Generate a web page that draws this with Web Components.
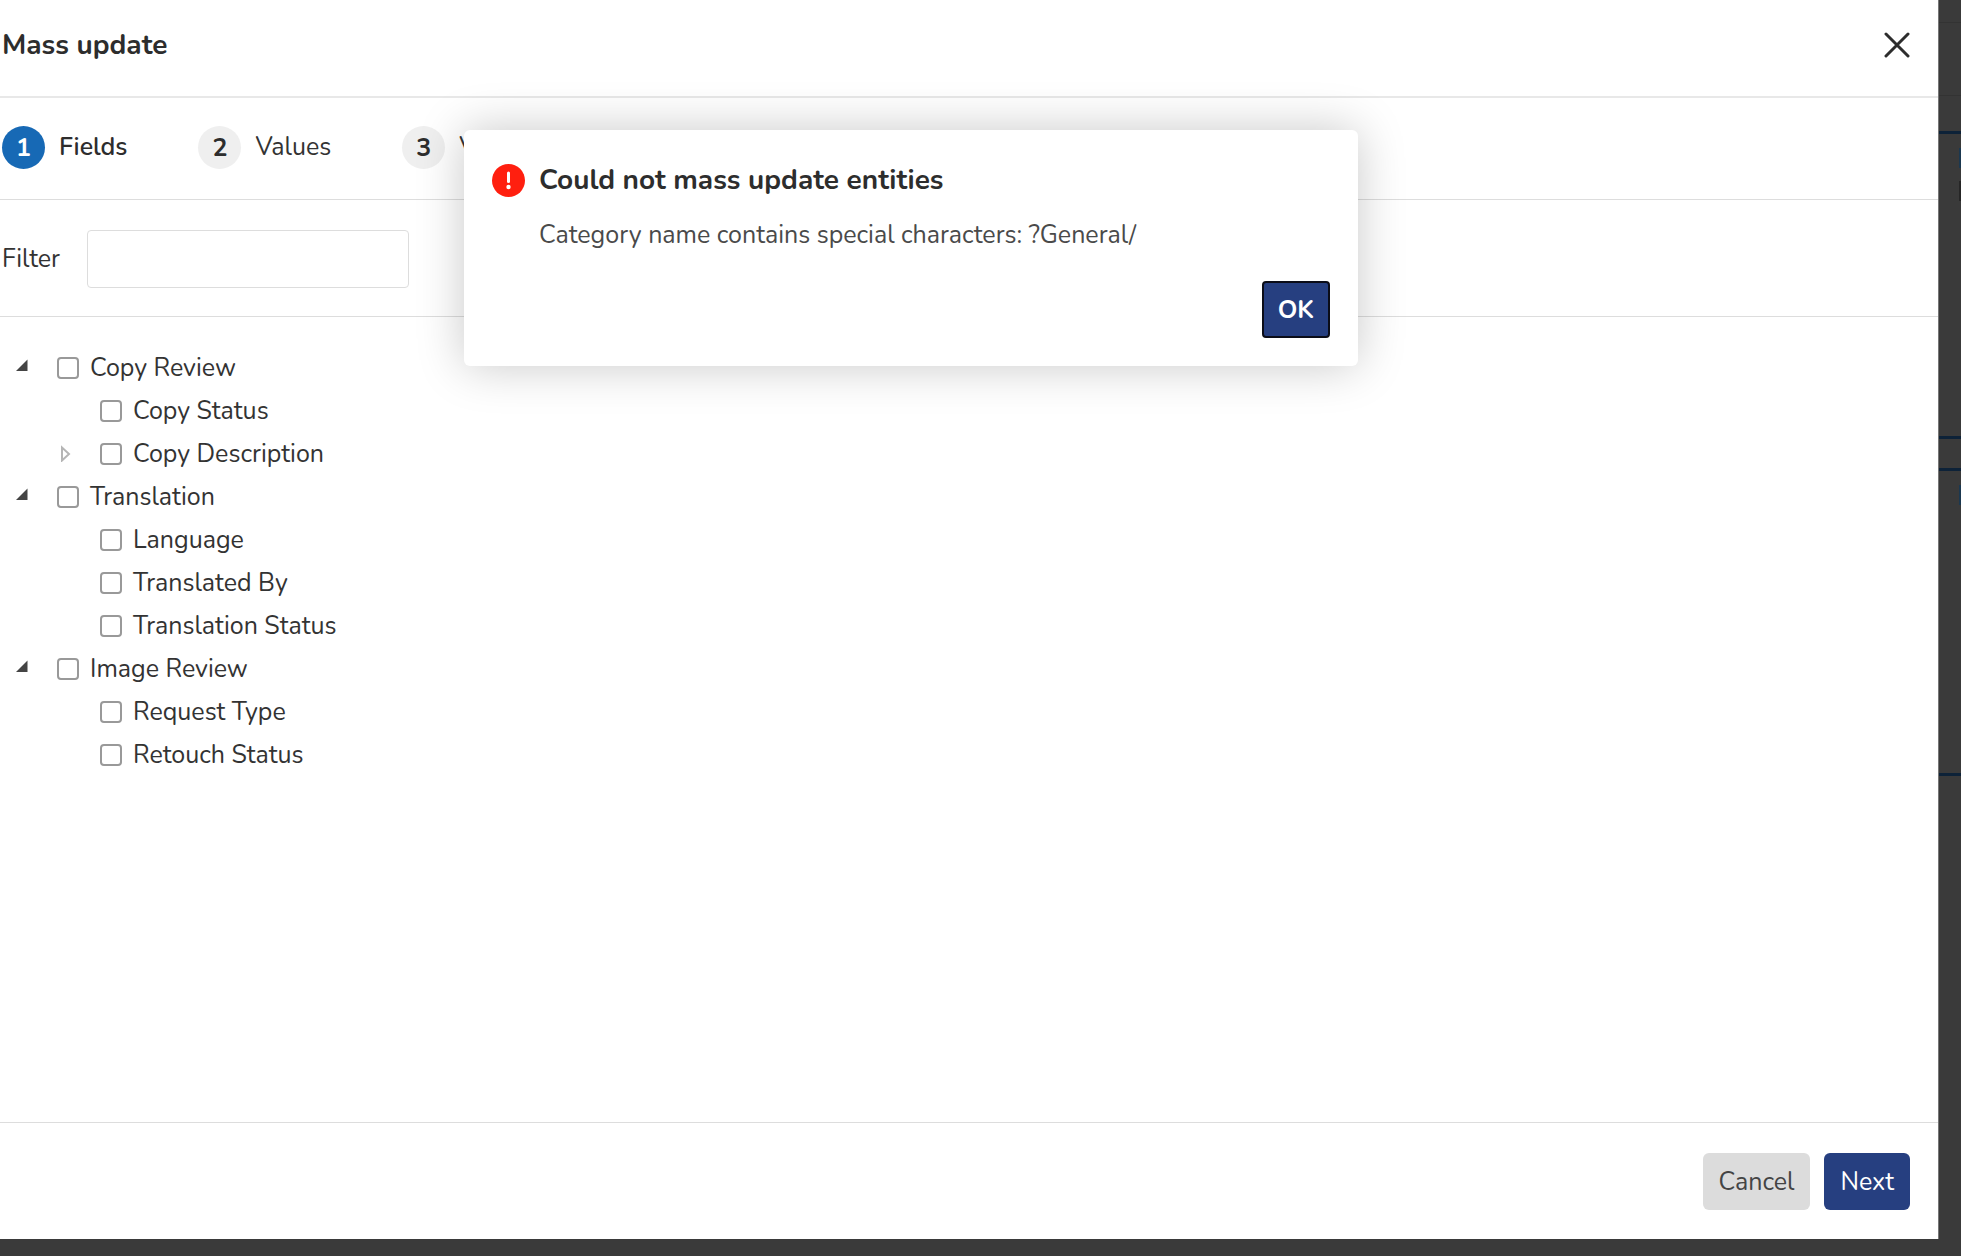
<!DOCTYPE html>
<html lang="en">
<head>
<meta charset="utf-8">
<title>Mass update</title>
<style>
html, body { height: 100%; }
body {
  margin: 0;
  background: #3a3a3a;
  color: #333;
  font: 25px/36px Nunito, "Nunito Sans", "Open Sans", sans-serif;
}
</style>
</head>
<body>
<mass-update-page>
  <side-panel heading="Mass update">
    <step-list slot="steps">
      <step-item number="1" current>Fields</step-item>
      <step-item number="2">Values</step-item>
      <step-item number="3">Verify</step-item>
    </step-list>
    <filter-bar slot="filter"></filter-bar>
    <field-tree>
      <tree-node label="Copy Review" state="open">
        <tree-node label="Copy Status"></tree-node>
        <tree-node label="Copy Description" state="closed"></tree-node>
      </tree-node>
      <tree-node label="Translation" state="open">
        <tree-node label="Language"></tree-node>
        <tree-node label="Translated By"></tree-node>
        <tree-node label="Translation Status"></tree-node>
      </tree-node>
      <tree-node label="Image Review" state="open">
        <tree-node label="Request Type"></tree-node>
        <tree-node label="Retouch Status"></tree-node>
      </tree-node>
    </field-tree>
    <action-button slot="actions" kind="secondary">Cancel</action-button>
    <action-button slot="actions">Next</action-button>
  </side-panel>
  <dimmed-page slot="behind"></dimmed-page>
  <error-dialog slot="overlay" heading="Could not mass update entities">
    Category name contains special characters: ?General/
    <action-button slot="action" kind="focused">OK</action-button>
  </error-dialog>
</mass-update-page>

<script>
class BaseElement extends HTMLElement {
  connectedCallback() {
    if (this.shadowRoot) return;
    this.attachShadow({ mode: 'open' }).innerHTML =
      '<style>*{box-sizing:border-box}' + this.constructor.css + '</style>' + this.render();
  }
  attr(name) { return this.getAttribute(name) || ''; }
}

customElements.define('mass-update-page', class extends BaseElement {
  static css = `
    :host { display: grid; grid-template-columns: 1fr 23px; min-height: 100vh; box-sizing: border-box; padding-bottom: 17px; position: relative; }
  `;
  render() { return '<slot></slot><slot name="behind"></slot><slot name="overlay"></slot>'; }
});

customElements.define('side-panel', class extends BaseElement {
  static css = `
    :host { display: flex; flex-direction: column; background: #fff; min-width: 0; }
    header { display: flex; align-items: center; justify-content: space-between; padding: 23px 28px 29px 2px; border-bottom: 2px solid #e8e8e8; }
    h1 { margin: 0; font-size: 28px; line-height: 44px; font-weight: 700; color: #2d2d2d; }
    .close { border: 0; padding: 0; background: none; display: flex; }
    main { flex: 1; }
    footer { display: flex; justify-content: flex-end; gap: 14px; padding: 30px 28px 29px; border-top: 1px solid #ddd; }
  `;
  render() {
    return `<header><h1>${this.attr('heading')}</h1>
      <button class="close" aria-label="Close"><svg width="26" height="26" viewBox="0 0 26 26" fill="none" stroke="#2d2d2d" stroke-width="3" stroke-linecap="round"><path d="M2 2 24 24M24 2 2 24"/></svg></button></header>
      <slot name="steps"></slot><slot name="filter"></slot>
      <main><slot></slot></main><footer><slot name="actions"></slot></footer>`;
  }
});

customElements.define('step-list', class extends BaseElement {
  static css = `:host { display: flex; gap: 71px; padding: 27px 2px 30px; border-bottom: 1px solid #ddd; }`;
  render() { return '<slot></slot>'; }
});

customElements.define('step-item', class extends BaseElement {
  static css = `
    :host { display: flex; align-items: center; gap: 14px; line-height: 44px; }
    .n { width: 43px; height: 43px; border-radius: 50%; background: #efefef; text-align: center; font-weight: 700; color: #2d2d2d; }
    :host([current]) { font-weight: 600; color: #2d2d2d; }
    :host([current]) .n { background: #1769b5; color: #fff; }
  `;
  render() { return `<span class="n">${this.attr('number')}</span><span><slot></slot></span>`; }
});

customElements.define('filter-bar', class extends BaseElement {
  static css = `
    :host { display: flex; align-items: center; gap: 27px; padding: 30px 2px 28px; border-bottom: 1px solid #ddd; }
    input { width: 322px; height: 58px; padding: 0 14px; border: 1px solid #ddd; border-radius: 4px; background: #fff; font: inherit; color: inherit; }
  `;
  render() { return '<label for="filter">Filter</label><input id="filter" type="text">'; }
});

customElements.define('field-tree', class extends BaseElement {
  static css = `:host { display: block; padding: 29px 14px; }`;
  render() { return '<slot></slot>'; }
});

customElements.define('tree-node', class extends BaseElement {
  static css = `
    :host { display: block; }
    .row { display: flex; align-items: center; height: 43px; }
    .toggle { width: 43px; height: 43px; flex: none; border: 0; padding: 0 0 2px; background: none; display: flex; align-items: center; }
    input { appearance: none; flex: none; width: 22px; height: 22px; margin: 0 11px 0 0; border: 2px solid #999; border-radius: 4px; background: #fff; }
    .children { padding-left: 43px; }
  `;
  render() {
    const state = this.attr('state');
    const icon = {
      open: '<svg width="16" height="18" viewBox="0 0 16 18"><path d="M2 13 13.500 1.500V13Z" fill="#444"/></svg>',
      closed: '<svg width="16" height="18" viewBox="0 0 16 18"><path d="M5 3.500V16.500L12 10Z" fill="none" stroke="#b5b5b5" stroke-width="2"/></svg>',
    }[state];
    const toggle = icon
      ? `<button class="toggle" aria-label="Toggle ${this.attr('label')}" aria-expanded="${state === 'open'}">${icon}</button>`
      : '<span class="toggle"></span>';
    return `<div class="row">${toggle}<input id="box" type="checkbox"><label for="box">${this.attr('label')}</label></div>
      <div class="children"><slot></slot></div>`;
  }
});

customElements.define('action-button', class extends BaseElement {
  static css = `
    :host { display: block; }
    button { display: block; height: 57px; padding: 0 16px; border: 0; border-radius: 6px; background: #263f80; color: #fff; font: inherit; }
    :host([kind="secondary"]) button { background: #dcdcdc; color: #444; }
    :host([kind="focused"]) button { border: 2px solid #0b0d18; border-radius: 4px; padding: 0 14px; font-weight: 700; }
  `;
  render() { return '<button type="button"><slot></slot></button>'; }
});

customElements.define('dimmed-page', class extends BaseElement {
  static css = `
    :host { display: block; border-left: 1px solid #777; background: #3a3a3a; }
    .bar { height: 23px; border-bottom: 1px solid #333; }
    .tabs { height: 73px; border-bottom: 1px solid #333; margin-bottom: 35px; }
    .card { height: 308px; margin-bottom: 29px; padding-top: 14px; border: solid #0d2238; border-width: 3px 0; }
    .card i { display: block; width: 2px; height: 20px; margin: 0 0 13px auto; background: #1b3850; }
    .card i + i { background: #262626; }
  `;
  render() {
    return '<div class="bar"></div><div class="tabs"></div><div class="card"><i></i><i></i></div><div class="card"><i></i></div>';
  }
});

customElements.define('error-dialog', class extends BaseElement {
  static css = `
    :host { position: absolute; top: 130px; left: 464px; width: 894px; }
    section { display: grid; grid-template-columns: 33px 1fr; column-gap: 14px; padding: 28px; background: #fff; border-radius: 6px; box-shadow: 0 0 48px rgba(0,0,0,.22); }
    svg { align-self: center; }
    h2 { margin: 0; font-size: 28px; line-height: 44px; font-weight: 700; color: #2d2d2d; }
    p { grid-column: 2; margin: 15px 0 28px; color: #4a4a4a; }
    .action { grid-column: 2; justify-self: end; }
  `;
  render() {
    return `<section role="alertdialog" aria-labelledby="t" aria-describedby="d">
      <svg width="33" height="33" viewBox="0 0 33 33"><circle cx="16.500" cy="16.500" r="16.500" fill="#ff1f0f"/><path d="M16.500 9V17.500" stroke="#fff" stroke-width="3" stroke-linecap="round"/><circle cx="16.500" cy="23" r="2.200" fill="#fff"/></svg>
      <h2 id="t">${this.attr('heading')}</h2>
      <p id="d"><slot></slot></p>
      <div class="action"><slot name="action"></slot></div></section>`;
  }
});
</script>
</body>
</html>
